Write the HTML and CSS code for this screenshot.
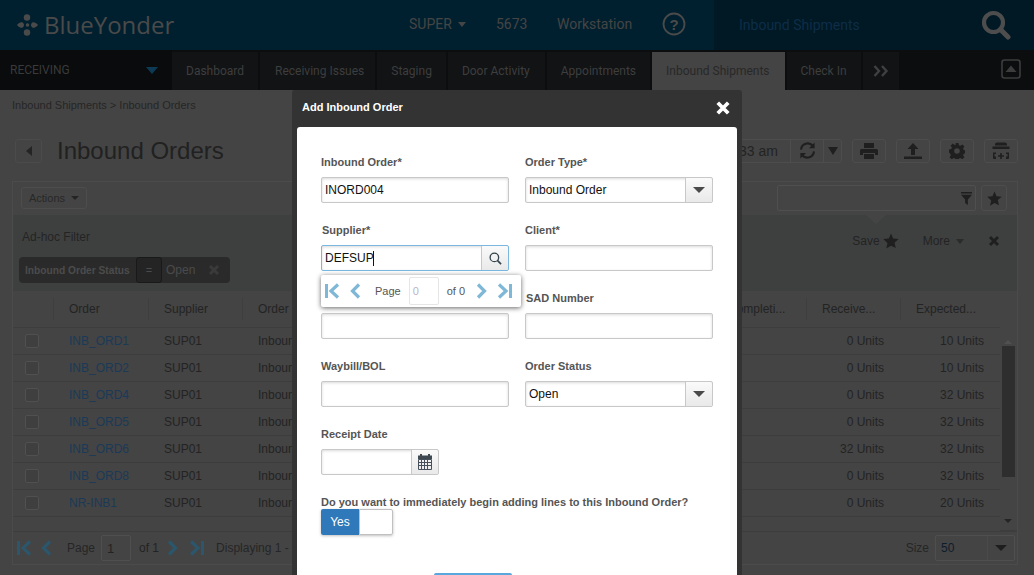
FILE: index.html
```html
<!DOCTYPE html>
<html lang="en">
<head>
<meta charset="utf-8">
<title>Inbound Orders</title>
<link rel="stylesheet" href="styles.css">
</head>
<body>
<svg class="defs" width="0" height="0">
  <defs>
    <symbol id="i-first" viewBox="0 0 16 16"><path d="M1 1h3v14H1z"/><path d="M14 1.500 7 8l7 6.500" fill="none" stroke="currentColor" stroke-width="3.200"/></symbol>
    <symbol id="i-prev" viewBox="0 0 16 16"><path d="M11 1.500 4.500 8l6.500 6.500" fill="none" stroke="currentColor" stroke-width="3.200"/></symbol>
    <symbol id="i-next" viewBox="0 0 16 16"><path d="M5 1.500 11.500 8 5 14.500" fill="none" stroke="currentColor" stroke-width="3.200"/></symbol>
    <symbol id="i-last" viewBox="0 0 16 16"><path d="M12 1h3v14h-3z"/><path d="M2 1.500 9 8l-7 6.500" fill="none" stroke="currentColor" stroke-width="3.200"/></symbol>
    <symbol id="i-star" viewBox="0 0 16 16"><path d="M8 .5l2.200 5.100 5.500.5-4.200 3.600 1.300 5.400L8 12.700l-4.800 2.900 1.300-5.400L.3 6.100l5.500-.5z"/></symbol>
    <symbol id="i-x" viewBox="0 0 12 12"><path d="M2 2l8 8M10 2l-8 8" fill="none" stroke="currentColor" stroke-width="3"/></symbol>
  </defs>
</svg>

<header class="topbar">
  <div class="brand">
    <svg class="brand-mark" viewBox="0 0 24 24" width="24" height="24"><g fill="#4a4a4a"><circle cx="12" cy="4.500" r="3.200"/><circle cx="12" cy="19.500" r="3.200"/><path d="M2 12c1.500-2 3.500-3 5-2.800 1 .2 2 1.500 2 2.800s-1 2.600-2 2.800C5.500 15 3.500 14 2 12zM23 12c-1.500-2-3.500-3-5-2.800-1 .2-2 1.500-2 2.800s1 2.600 2 2.800c1.500.2 3.500-.8 5-2.800z"/><circle cx="12.500" cy="12" r="1.800"/></g></svg>
    <span class="brand-name">BlueYonder</span>
  </div>
  <div class="top-items">
    <span class="top-item top-role">SUPER <i class="caret caret-top"></i></span>
    <span class="top-item top-code">5673</span>
    <span class="top-item top-ws">Workstation</span>
    <svg class="top-help" viewBox="0 0 24 24" width="24" height="24"><circle cx="12" cy="12" r="10.500" fill="none" stroke="#4a4a4a" stroke-width="1.800"/><text x="12" y="17.500" text-anchor="middle" class="help-mark">?</text></svg>
  </div>
  <div class="top-search">
    <span class="search-title">Inbound Shipments</span>
    <svg class="search-icon" viewBox="0 0 30 30" width="30" height="30"><circle cx="12.500" cy="12.500" r="9.500" fill="none" stroke="#4d4d4d" stroke-width="4.200"/><path d="M19.500 19.500 27 27" stroke="#4d4d4d" stroke-width="5" stroke-linecap="round"/></svg>
  </div>
</header>

<nav class="navbar">
  <div class="nav-menu"><span>RECEIVING</span><i class="nav-caret"></i></div>
  <a class="tab">Dashboard</a>
  <a class="tab tab-tight">Receiving Issues</a>
  <a class="tab">Staging</a>
  <a class="tab tab-wide">Door Activity</a>
  <a class="tab">Appointments</a>
  <a class="tab tab-active tab-wide">Inbound Shipments</a>
  <a class="tab">Check In</a>
  <a class="tab tab-more"><svg viewBox="0 0 16 12" width="16" height="12"><path d="M1.500 1 6 6l-4.500 5M9 1l4.500 5L9 11" fill="none" stroke="#404040" stroke-width="2.400"/></svg></a>
  <span class="nav-collapse"><svg viewBox="0 0 20 20" width="20" height="20"><rect x="1" y="1" width="18" height="18" rx="2.500" fill="none" stroke="#3d3d3d" stroke-width="1.600"/><path d="M4.500 13 10 6.500 15.500 13z" fill="#3d3d3d"/></svg></span>
</nav>

<main class="page">
  <div class="crumbs">Inbound Shipments &gt; Inbound Orders</div>
  <div class="title-row">
    <button class="btn btn-back"><i class="caret-left"></i></button>
    <h1 class="title">Inbound Orders</h1>
    <div class="title-tools">
      <span class="time-box">
        <span class="time-text">11:33 am</span>
        <span class="time-refresh"><svg viewBox="0 0 20 20" width="19" height="19"><path d="M3.200 9A7 7 0 0 1 15.500 5M16.800 11A7 7 0 0 1 4.500 15" fill="none" stroke="#1f1f1f" stroke-width="2.200"/><path d="M17.500 1.500v6h-6zM2.500 18.500v-6h6z" fill="#1f1f1f"/></svg></span>
        <span class="time-drop"><i class="caret caret-drop"></i></span>
      </span>
      <button class="btn btn-tool"><svg viewBox="0 0 18 16" width="18" height="16"><path fill="#1f1f1f" d="M4 0h10v5H4zM1.500 6h15A1.500 1.500 0 0 1 18 7.500V12h-3v-2H3v2H0V7.500A1.500 1.500 0 0 1 1.500 6zM4 11h10v5H4z"/></svg></button>
      <button class="btn btn-tool"><svg viewBox="0 0 18 16" width="18" height="16"><path fill="#1f1f1f" d="M9 0l5.500 6H11v6H7V6H3.500zM0 13.500h18V16H0z"/></svg></button>
      <button class="btn btn-tool"><svg viewBox="0 0 16 16" width="16" height="16"><path fill="#1f1f1f" fill-rule="evenodd" d="M6.500 0h3l.4 2.200 1.500.6 1.900-1.300 2.100 2.100-1.300 1.900.6 1.500 2.300.4v3l-2.300.4-.6 1.500 1.300 1.900-2.100 2.100-1.900-1.300-1.500.6-.4 2.300h-3l-.4-2.300-1.500-.6-1.900 1.300-2.100-2.100 1.300-1.900-.6-1.500L0 9.500v-3l2.300-.4.6-1.500-1.300-1.900 2.100-2.100 1.900 1.300 1.500-.6zM8 5.200a2.800 2.800 0 1 0 0 5.600 2.800 2.800 0 0 0 0-5.600z"/></svg></button>
      <button class="btn btn-tool"><svg viewBox="0 0 18 18" width="18" height="18"><path fill="#1f1f1f" d="M5 .5h8a2 2 0 0 1 2 2v1H3v-1a2 2 0 0 1 2-2zM.5 4.500h17V7H.5zM1 10.500h3V12H2.500v2.500H4V17H2a1 1 0 0 1-1-1zM17 10.500h-3V12h1.500v2.500H14V17h2a1 1 0 0 0 1-1zM8.200 11h1.600v2.200H12v1.600H9.800V17H8.200v-2.200H6v-1.600h2.200z"/></svg></button>
    </div>
  </div>

  <section class="panel">
    <div class="panel-bar">
      <button class="btn btn-actions">Actions <i class="caret caret-dark"></i></button>
      <div class="bar-right">
        <span class="filter-input"><svg viewBox="0 0 12 14" width="11" height="13"><path fill="#1f1f1f" d="M0 0h12v1.500H0zM0 3h12L7.500 8v6l-3-2V8z"/></svg></span>
        <button class="btn btn-star"><svg width="15" height="15"><use href="#i-star" fill="#1f1f1f"/></svg></button>
      </div>
    </div>
    <div class="filter-area">
      <i class="notch"></i>
      <div class="filter-head">
        <span class="filter-title">Ad-hoc Filter</span>
        <span class="filter-actions">
          <span class="fa-save">Save <svg width="16" height="16"><use href="#i-star" fill="#1f1f1f"/></svg></span>
          <span class="fa-more">More <i class="caret caret-dim"></i></span>
          <svg class="fa-close" width="12" height="12"><use href="#i-x" color="#1f1f1f"/></svg>
        </span>
      </div>
      <div class="chip">
        <span class="chip-name">Inbound Order Status</span>
        <span class="chip-op">=</span>
        <span class="chip-val">Open</span>
        <svg class="chip-x" width="12" height="12"><use href="#i-x" color="#3a3a3a"/></svg>
      </div>
    </div>

    <div class="grid">
      <div class="grid-main">
        <div class="row row-head">
          <span class="cell"></span><span class="cell cell-sep">Order</span><span class="cell cell-sep">Supplier</span><span class="cell cell-sep">Order</span><span class="cell cell-sep">Completi...</span><span class="cell cell-sep">Receive...</span><span class="cell cell-sep">Expected...</span>
        </div>
        <div class="row"><span class="cell"><i class="check"></i></span><span class="cell link">INB_ORD1</span><span class="cell">SUP01</span><span class="cell">Inbound</span><span class="cell"></span><span class="cell num">0 Units</span><span class="cell num">10 Units</span></div>
        <div class="row"><span class="cell"><i class="check"></i></span><span class="cell link">INB_ORD2</span><span class="cell">SUP01</span><span class="cell">Inbound</span><span class="cell"></span><span class="cell num">0 Units</span><span class="cell num">10 Units</span></div>
        <div class="row"><span class="cell"><i class="check"></i></span><span class="cell link">INB_ORD4</span><span class="cell">SUP01</span><span class="cell">Inbound</span><span class="cell"></span><span class="cell num">0 Units</span><span class="cell num">32 Units</span></div>
        <div class="row"><span class="cell"><i class="check"></i></span><span class="cell link">INB_ORD5</span><span class="cell">SUP01</span><span class="cell">Inbound</span><span class="cell"></span><span class="cell num">0 Units</span><span class="cell num">32 Units</span></div>
        <div class="row"><span class="cell"><i class="check"></i></span><span class="cell link">INB_ORD6</span><span class="cell">SUP01</span><span class="cell">Inbound</span><span class="cell"></span><span class="cell num">32 Units</span><span class="cell num">32 Units</span></div>
        <div class="row"><span class="cell"><i class="check"></i></span><span class="cell link">INB_ORD8</span><span class="cell">SUP01</span><span class="cell">Inbound</span><span class="cell"></span><span class="cell num">0 Units</span><span class="cell num">32 Units</span></div>
        <div class="row"><span class="cell"><i class="check"></i></span><span class="cell link">NR-INB1</span><span class="cell">SUP01</span><span class="cell">Inbound</span><span class="cell"></span><span class="cell num">0 Units</span><span class="cell num">20 Units</span></div>
      </div>
      <div class="scroll">
        <i class="scroll-up"></i>
        <i class="scroll-thumb"></i>
        <i class="scroll-down"></i>
      </div>
    </div>

    <div class="pager">
      <svg class="pg-icon pg-first" width="16" height="16"><use href="#i-first"/></svg>
      <svg class="pg-icon pg-prev" width="16" height="16"><use href="#i-prev"/></svg>
      <span class="pg-page">Page</span>
      <span class="pg-input">1</span>
      <span class="pg-of">of 1</span>
      <svg class="pg-icon pg-next" width="16" height="16"><use href="#i-next"/></svg>
      <svg class="pg-icon pg-last" width="16" height="16"><use href="#i-last"/></svg>
      <span class="pg-disp">Displaying 1 - 9</span>
      <span class="pg-size">Size</span>
      <span class="pg-select"><span class="pg-select-val">50</span><span class="pg-select-btn"><i class="caret caret-large"></i></span></span>
    </div>
  </section>
</main>

<div class="modal">
  <div class="modal-head">
    <span class="modal-title">Add Inbound Order</span>
    <svg class="modal-close" width="14" height="14" viewBox="0 0 12 12"><path d="M1.500 1.500l9 9M10.500 1.500l-9 9" fill="none" stroke="#fff" stroke-width="3.200"/></svg>
  </div>
  <div class="modal-body">
    <form class="form">
      <div class="field"><label>Inbound Order*</label><div class="control"><span class="val">INORD004</span></div></div>
      <div class="field"><label>Order Type*</label><div class="control"><span class="val">Inbound Order</span><span class="addon"><i class="caret caret-form"></i></span></div></div>
      <div class="field field-shift"><label>Supplier*</label><div class="control control-focus"><span class="val val-cursor">DEFSUP</span><span class="addon addon-focus"><svg viewBox="0 0 14 14" width="13" height="13"><circle cx="5.800" cy="5.800" r="4.600" fill="none" stroke="#33444f" stroke-width="1.400"/><path d="M9 9l4 4" stroke="#33444f" stroke-width="1.800"/></svg></span></div></div>
      <div class="field"><label>Client*</label><div class="control"></div></div>
      <div class="field"><label>&nbsp;</label><div class="control"></div></div>
      <div class="field"><label class="label-shift">SAD Number</label><div class="control"></div></div>
      <div class="field"><label>Waybill/BOL</label><div class="control"></div></div>
      <div class="field"><label>Order Status</label><div class="control"><span class="val">Open</span><span class="addon"><i class="caret caret-form"></i></span></div></div>
      <div class="field"><label>Receipt Date</label>
        <div class="control control-date"><span class="addon addon-date"><svg viewBox="0 0 16 16" width="16" height="16"><path fill="#3f4952" d="M1 1.500h2V0h2v1.500h6V0h2v1.500h2V5H1z"/><path fill="none" stroke="#46505a" d="M1.500 5.500h13v10h-13zM1.500 8.500h13M1.500 11.500h13M4.500 5.500v10M7.500 5.500v10M10.500 5.500v10"/></svg></span></div>
      </div>
      <div class="field"></div>
      <div class="field field-wide"><label>Do you want to immediately begin adding lines to this Inbound Order?</label>
        <div class="toggle"><span class="toggle-on">Yes</span><span class="toggle-off"></span></div>
      </div>
    </form>
    <div class="modal-actions"><button class="btn-primary" type="button"></button></div>
    <div class="lookup-pager">
      <svg class="lk-icon" width="16" height="16"><use href="#i-first"/></svg>
      <svg class="lk-icon lk-prev" width="16" height="16"><use href="#i-prev"/></svg>
      <span class="lk-page">Page</span>
      <span class="lk-input">0</span>
      <span class="lk-of">of 0</span>
      <svg class="lk-icon lk-next" width="16" height="16"><use href="#i-next"/></svg>
      <svg class="lk-icon lk-last" width="16" height="16"><use href="#i-last"/></svg>
    </div>
  </div>
</div>
</body>
</html>
```
FILE: styles.css
```css
* { box-sizing: border-box; }
html, body { margin: 0; padding: 0; height: 575px; overflow: hidden; }
body { background: #444; font-family: "Liberation Sans", Arial, sans-serif; font-size: 12px; color: #232323; position: relative; }
.defs { position: absolute; }
i { display: block; }

/* top bar */
.topbar { height: 50px; display: flex; background: #01202f; font-family: Roboto, sans-serif; }
.brand { width: 409px; display: flex; align-items: center; padding-left: 15px; flex: none; }
.brand-mark { flex: none; }
.brand-name { font-family: "Open Sans", sans-serif; font-size: 24px; color: #4a4a4a; margin-left: 5px; line-height: 1; }
.top-items { width: 305px; display: flex; align-items: center; flex: none; color: #454545; font-size: 14px; padding-bottom: 2px; }
.top-item { display: flex; align-items: center; gap: 6px; }
.top-role { width: 87px; }
.top-code { width: 61px; }
.top-ws { width: 105px; }
.help-mark { font: bold 15px "Liberation Sans", sans-serif; fill: #4a4a4a; }
.top-search { flex: 1; background: #011924; display: flex; align-items: center; padding: 0 23px 0 25px; justify-content: space-between; }
.search-title { color: #0d2d49; font-size: 14px; }
.caret { width: 0; height: 0; border-left: 4.500px solid transparent; border-right: 4.500px solid transparent; border-top: 5px solid #454545; }
.caret-top { margin-top: 1px; }

/* nav */
.navbar { height: 40px; display: flex; background: #0b0d0f; font-family: Roboto, sans-serif; font-size: 12px; padding-top: 2px; position: relative; }
.nav-menu { width: 172px; display: flex; align-items: center; justify-content: space-between; padding: 0 14px 0 10px; color: #3a3a3a; font-size: 12px; background: #090b0d; margin-top: -2px; flex: none; }
.nav-caret { width: 0; height: 0; border-left: 6px solid transparent; border-right: 6px solid transparent; border-top: 7px solid #0d3b56; }
.tab { display: flex; align-items: center; padding: 0 14px; background: #111315; color: #3e3e3e; margin-right: 2px; }
.tab-tight { padding: 0 11px 0 15px; }
.tab-wide { padding-right: 15px; }
.tab-active { background: #444; color: #282828; }
.tab-more { padding: 0 10px; }
.nav-collapse { margin: 7px 13px 0 auto; }

/* page */
.page { padding: 0 16px 0 12px; }
.crumbs { height: 30px; display: flex; align-items: center; font-size: 11px; color: #262626; }
.title-row { display: flex; align-items: center; height: 61px; padding: 0 0 0 3px; }
.btn { background: #444; border: 1px solid #4d4d4d; border-radius: 3px; padding: 0; display: inline-flex; align-items: center; justify-content: center; font: inherit; color: inherit; }
.btn-back { width: 27px; height: 24px; border-color: #4b4b4b; }
.caret-left { width: 0; height: 0; border-top: 5px solid transparent; border-bottom: 5px solid transparent; border-right: 6px solid #242424; }
.title { font-weight: normal; font-size: 24px; color: #212121; margin: 0 0 0 15px; }
.title-tools { margin-left: auto; display: flex; align-items: center; gap: 10px; }
.time-box { display: flex; height: 24px; border: 1px solid #4d4d4d; border-radius: 3px; font-size: 14px; width: 170px; }
.time-text { flex: 1; display: flex; align-items: center; justify-content: flex-end; padding-right: 12px; }
.time-refresh { width: 33px; display: flex; align-items: center; justify-content: center; border-left: 1px solid #4d4d4d; }
.time-drop { width: 18px; display: flex; align-items: center; justify-content: center; border-left: 1px solid #4d4d4d; }
.caret-dark { border-top-color: #242424; }
.caret-drop { border-top: 8px solid #1f1f1f; border-left-width: 5.500px; border-right-width: 5.500px; }
.btn-tool { width: 34px; height: 24px; }

.panel { border: 1px solid #4b4b4b; height: 384px; }
.panel-bar { height: 33px; display: flex; align-items: center; justify-content: space-between; padding: 0 10px 1px 8px; }
.btn-actions { width: 66px; height: 22px; font-size: 11px; gap: 6px; color: #282828; }
.btn-actions .caret { border-left-width: 4px; border-right-width: 4px; border-top-width: 4px; }
.bar-right { display: flex; gap: 5px; }
.filter-input { width: 199px; height: 26px; border: 1px solid #4f4f4f; border-radius: 2px; display: flex; align-items: center; justify-content: flex-end; padding-right: 3px; }
.btn-star { width: 26px; height: 26px; }
.filter-area { height: 76px; background: #3e4040; position: relative; padding: 0 9px; }
.notch { position: absolute; left: 853px; top: 0; width: 0; height: 0; border-left: 10px solid transparent; border-right: 10px solid transparent; border-top: 9px solid #444; }
.filter-head { display: flex; justify-content: space-between; align-items: center; height: 42px; padding-top: 1px; }
.filter-title { font-size: 12px; color: #242424; }
.filter-actions { display: flex; align-items: center; font-size: 12px; color: #232323; padding-top: 9px; }
.fa-save { display: flex; align-items: center; gap: 3px; margin-right: 24px; margin-left: -1px; }
.fa-more { display: flex; align-items: center; gap: 6px; margin-right: 24px; }
.caret-dim { border-top-color: #2b2b2b; }
.fa-close { margin-right: 8px; }
.chip { margin-left: -3px; width: 211px; height: 26px; background: #2a2a2a; border-radius: 4px; display: flex; align-items: center; }
.chip-name { font-size: 10.200px; font-weight: bold; color: #4c4c4c; padding-left: 6px; width: 117px; white-space: nowrap; }
.chip-op { width: 26px; height: 26px; background: #242424; border: 1px solid #191919; border-radius: 3px; display: flex; align-items: center; justify-content: center; color: #4a4a4a; font-size: 11px; }
.chip-val { color: #4a4a4a; margin-left: 4px; font-size: 12px; }
.chip-x { margin-left: 13px; }

.grid { height: 240px; display: flex; }
.grid-main { flex: 1; min-width: 0; }
.row { display: grid; grid-template-columns: 41px 95px 94px 470px 94px 94px 100px; height: 27px; border-bottom: 1px solid #3d3d3d; }
.row-head { height: 37px; border-bottom: 1px solid #3d3d3d; }
.cell { display: flex; align-items: center; padding: 0 0 1px 15px; color: #232323; white-space: nowrap; overflow: hidden; }
.row-head .cell { padding-bottom: 0; }
.row-head .cell-sep { border-left: 1px solid #3e3e3e; margin: 7px 0 7px -1px; padding-left: 15px; }
.num { justify-content: flex-end; padding: 0 17px 1px 0; }
.link { color: #1b3a57; }
.check { width: 14px; height: 14px; border: 1px solid #505050; border-radius: 2px; background: #3f3f3f; margin: 1px 0 0 -3px; }
.scroll { width: 17px; flex: none; position: relative; border-bottom: 1px solid #3d3d3d; border-top: 1px solid #444; }
.scroll-up, .scroll-down { position: absolute; left: 4px; width: 0; height: 0; border-left: 4px solid transparent; border-right: 4px solid transparent; }
.scroll-up { top: 48px; border-bottom: 4px solid #515151; }
.scroll-down { top: 227px; border-top: 4px solid #242424; }
.scroll-thumb { position: absolute; left: 2px; top: 54px; width: 13px; height: 131px; background: #2e2e2e; }

.pager { height: 33px; display: flex; align-items: center; position: relative; padding: 0 0 0 3px; border-top: 1px solid #3d3d3d; }
.pg-icon { color: #2b566b; fill: #2b566b; flex: none; }
.pg-first { margin-right: 7px; }
.pg-page { margin: 0 6px 0 12px; color: #262626; }
.pg-input { width: 30px; height: 26px; border: 1px solid #4f4f4f; border-radius: 2px; padding: 0 0 0 5px; display: flex; align-items: center; font-size: 13px; }
.pg-of { margin: 0 5px 0 8px; }
.pg-next { margin-right: 9px; }
.pg-disp { margin-left: 11px; white-space: nowrap; color: #262626; }
.pg-size { margin-left: auto; margin-right: 6px; color: #262626; }
.pg-select { width: 80px; height: 26px; border: 1px solid #4f4f4f; border-radius: 2px; display: flex; margin-right: 2px; }
.pg-select-val { flex: 1; display: flex; align-items: center; padding-left: 5px; color: #0c1d2c; }
.pg-select-btn { width: 27px; border-left: 1px solid #4a4a4a; display: flex; align-items: center; justify-content: center; }
.caret-large { border-left-width: 6px; border-right-width: 6px; border-top-width: 6px; border-top-color: #1e1e1e; }

/* modal */
.modal { position: absolute; left: 292px; top: 90px; width: 450px; background: #333; border-radius: 3px 3px 0 0; padding: 0 5px; }
.modal-head { height: 37px; display: flex; align-items: center; justify-content: space-between; padding: 0 7px 1px 5px; color: #fff; }
.modal-title { font-size: 11px; font-weight: bold; padding-bottom: 2px; }
.modal-body { background: #fff; border-radius: 3px 3px 0 0; padding: 27px 24px 0 24px; height: 460px; position: relative; }
.form { display: grid; grid-template-columns: 188px 188px; column-gap: 16px; row-gap: 0; }
.field { height: 68px; }
.field-shift label, .label-shift { padding-left: 1px; }
.field-wide { grid-column: 1 / -1; }
.field label { display: block; height: 23px; line-height: 16px; font-size: 11px; font-weight: bold; color: #555; white-space: nowrap; }
.control { height: 26px; border: 1px solid #c8c8c8; border-radius: 2px; display: flex; box-shadow: inset 0 1px 3px rgba(0,0,0,.15); align-items: stretch; }
.control-focus { border-color: #7ab8df; }
.control-date { width: 118px; justify-content: flex-end; }
.val { flex: 1; display: flex; align-items: center; padding-left: 3px; font-size: 12px; color: #111; }
.val-cursor::after { content: ""; width: 1px; height: 15px; background: #111; margin-left: -1px; }
.addon { width: 27px; border-left: 1px solid #c8c8c8; background: linear-gradient(#fafafa, #e9e9e9); display: flex; align-items: center; justify-content: center; border-radius: 0 2px 2px 0; }
.addon-focus { border-left-color: #c8c8c8; }
.caret-form { border-left-width: 6px; border-right-width: 6px; border-top-width: 6px; border-top-color: #4a4a4a; }
.toggle { width: 72px; height: 26px; display: flex; border-radius: 2px; box-shadow: 0 1px 3px rgba(0,0,0,.25); margin-top: -8px; }
.toggle-on { width: 38px; background: #2f79bb; color: #fff; font-size: 12px; display: flex; align-items: center; justify-content: center; border-radius: 2px 0 0 2px; }
.toggle-off { flex: 1; border: 1px solid #c0c0c0; border-radius: 0 2px 2px 0; background: #fff; }
.modal-actions { position: absolute; top: 446px; left: 137px; }
.btn-primary { width: 78px; height: 30px; background: #5aa7de; border: 0; border-radius: 2px; display: block; }
.lookup-pager { position: absolute; left: 24px; top: 148px; width: 200px; height: 32px; background: #fff; box-shadow: 0 1px 5px rgba(0,0,0,.6); border-radius: 2px; display: flex; align-items: center; padding-left: 3px; font-size: 11px; color: #555; }
.lk-icon { color: #7fb8d6; fill: #7fb8d6; flex: none; }
.lk-prev { margin-left: 8px; }
.lk-page { margin: 0 8px 0 11px; }
.lk-input { width: 30px; height: 28px; border: 1px solid #e6e6e6; border-radius: 2px; display: flex; align-items: center; padding-left: 3px; color: #b9b4cc; }
.lk-of { margin: 0 8px 0 8px; }
.lk-next { margin-right: 8px; }
```
